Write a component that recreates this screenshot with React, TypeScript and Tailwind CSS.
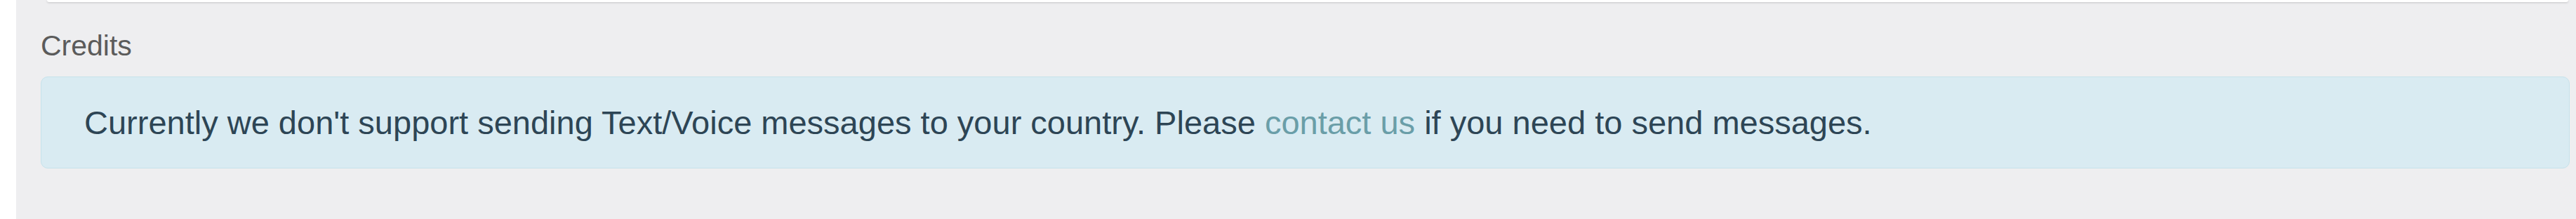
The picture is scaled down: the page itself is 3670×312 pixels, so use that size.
export default function App() {
  return (
    <div className="flex h-[312px] w-full overflow-hidden font-['Liberation_Sans',Arial,sans-serif]">
      {/* left edge of the sidebar */}
      <div className="w-[23px] shrink-0 bg-white" />

      <main className="flex-1 bg-[#eeeef0] pl-[35px] pr-[9px]">
        {/* bottom of the card above */}
        <div className="ml-[9px] mr-[2px] h-[3px] rounded-b-sm bg-white shadow-[0_1px_3px_rgba(0,0,0,0.18)]" />

        <h4 className="mt-[34px] text-[41px] leading-[56px] font-normal text-[#5b5b5b]">Credits</h4>

        <div className="mt-[16px] rounded-[10px] border border-[#c6e2eb] bg-[#d9ebf2] px-[61px] py-[32px] text-[47px] leading-[65px] text-[#2d4555]">
          Currently we don't support sending Text/Voice messages to your country. Please{" "}
          <a href="#" className="text-[#6a9ea8]">
            contact us
          </a>{" "}
          if you need to send messages.
        </div>
      </main>
    </div>
  );
}
